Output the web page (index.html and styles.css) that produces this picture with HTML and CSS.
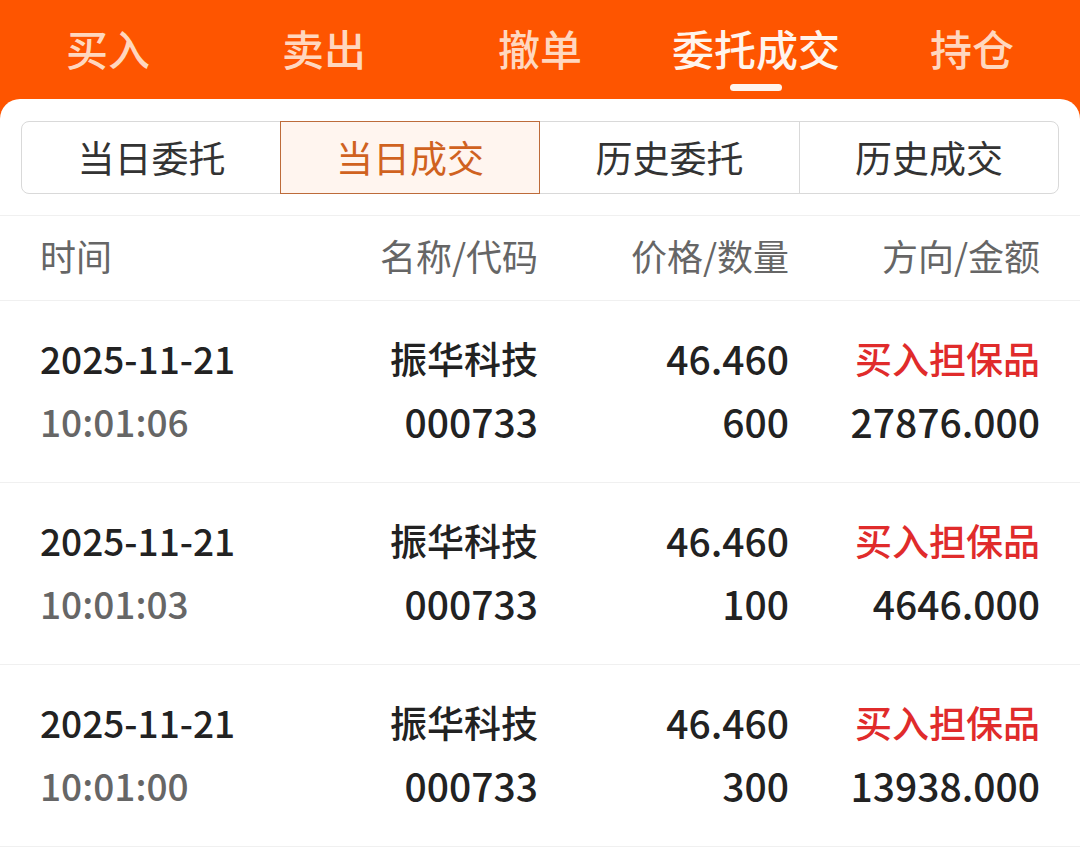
FILE: index.html
```html
<!DOCTYPE html>
<html lang="zh-CN">
<head>
<meta charset="utf-8">
<title>委托成交</title>
<link rel="stylesheet" href="styles.css">
</head>
<body>
<div class="app">
  <nav class="tabs">
    <div class="tab"><span class="tab-label">买入</span><span class="tab-bar"></span></div>
    <div class="tab"><span class="tab-label">卖出</span><span class="tab-bar"></span></div>
    <div class="tab"><span class="tab-label">撤单</span><span class="tab-bar"></span></div>
    <div class="tab active"><span class="tab-label">委托成交</span><span class="tab-bar"></span></div>
    <div class="tab"><span class="tab-label">持仓</span><span class="tab-bar"></span></div>
  </nav>
  <main class="panel">
    <div class="seg-wrap">
      <div class="seg">
        <div class="seg-item">当日委托</div>
        <div class="seg-item selected">当日成交</div>
        <div class="seg-item">历史委托</div>
        <div class="seg-item">历史成交</div>
      </div>
    </div>
    <div class="table">
      <div class="row head">
        <div class="cell left">时间</div>
        <div class="cell">名称/代码</div>
        <div class="cell">价格/数量</div>
        <div class="cell">方向/金额</div>
      </div>
      <div class="row">
        <div class="cell left"><div class="l1 date">2025-11-21</div><div class="l2 date muted">10:01:06</div></div>
        <div class="cell"><div class="l1">振华科技</div><div class="l2 num">000733</div></div>
        <div class="cell"><div class="l1 num">46.460</div><div class="l2 num">600</div></div>
        <div class="cell"><div class="l1 red">买入担保品</div><div class="l2 num">27876.000</div></div>
      </div>
      <div class="row">
        <div class="cell left"><div class="l1 date">2025-11-21</div><div class="l2 date muted">10:01:03</div></div>
        <div class="cell"><div class="l1">振华科技</div><div class="l2 num">000733</div></div>
        <div class="cell"><div class="l1 num">46.460</div><div class="l2 num">100</div></div>
        <div class="cell"><div class="l1 red">买入担保品</div><div class="l2 num">4646.000</div></div>
      </div>
      <div class="row">
        <div class="cell left"><div class="l1 date">2025-11-21</div><div class="l2 date muted">10:01:00</div></div>
        <div class="cell"><div class="l1">振华科技</div><div class="l2 num">000733</div></div>
        <div class="cell"><div class="l1 num">46.460</div><div class="l2 num">300</div></div>
        <div class="cell"><div class="l1 red">买入担保品</div><div class="l2 num">13938.000</div></div>
      </div>
    </div>
  </main>
</div>
</body>
</html>
```

FILE: styles.css
```css
html, body {
  margin: 0;
  padding: 0;
}
body {
  background: #fe5500;
  font-family: "Noto Sans CJK SC", "Noto Sans", sans-serif;
  color: #222;
}
.app {
  width: 1080px;
  min-height: 865px;
  display: flex;
  flex-direction: column;
}
.tabs {
  display: grid;
  grid-template-columns: repeat(5, 1fr);
  height: 99px;
  background: #fe5500;
}
.tab {
  display: flex;
  flex-direction: column;
  align-items: center;
  padding-top: 19px;
}
.tab-label {
  font-size: 42px;
  font-weight: 500;
  line-height: 58px;
  color: #ffd7bf;
}
.tab-bar {
  width: 52px;
  height: 7px;
  margin-top: 7px;
  border-radius: 4px;
  background: transparent;
}
.tab.active .tab-label {
  color: #fff4ec;
}
.tab.active .tab-bar {
  background: #fff4ec;
}
.panel {
  flex: 1;
  background: #fff;
  border-radius: 20px 20px 0 0;
}
.seg-wrap {
  padding: 22px 21px 21px;
  border-bottom: 1px solid #f0f0f0;
}
.seg {
  display: grid;
  grid-template-columns: repeat(4, 1fr);
  height: 73px;
  border: 1px solid #d9d9d9;
  border-radius: 8px;
  box-sizing: border-box;
}
.seg-item {
  display: flex;
  align-items: center;
  justify-content: center;
  font-size: 37px;
  color: #333;
  border-left: 1px solid #d9d9d9;
  margin: -1px 0;
  padding-bottom: 2px;
}
.seg-item:first-child {
  border-left: none;
}
.seg-item.selected {
  border: 1px solid #bd6b3a;
  background: #fff5ef;
  color: #d0621f;
  margin: -1px 0 -1px -1px;
}
.seg-item.selected + .seg-item {
  border-left: none;
}
.row {
  display: grid;
  grid-template-columns: 248px 250px 251px 1fr;
  border-bottom: 1px solid #f0f0f0;
  padding: 26px 40px 29px;
}
.row.head {
  padding-top: 0;
  padding-bottom: 6px;
  height: 78px;
  align-items: center;
}
.row.head .cell {
  font-size: 36px;
  font-weight: 400;
  color: #666;
}
.cell {
  text-align: right;
  font-size: 37px;
  font-weight: 500;
  white-space: nowrap;
}
.cell.left {
  text-align: left;
}
.l1, .l2 {
  line-height: 63px;
}
.num {
  font-size: 39px;
}
.date {
  font-size: 37px;
}
.muted {
  color: #666;
}
.red {
  color: #e02b2b;
}
```
